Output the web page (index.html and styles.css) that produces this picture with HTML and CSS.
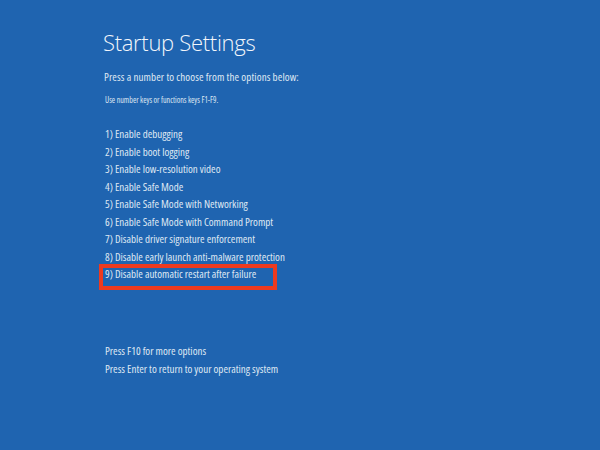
FILE: index.html
```html
<!DOCTYPE html>
<html>
<head>
<meta charset="utf-8">
<link rel="stylesheet" href="styles.css">
</head>
<body>
<div class="screen">
  <h1 class="title">Startup Settings</h1>
  <p class="lead">Press a number to choose from the options below:</p>
  <p class="hint">Use number keys or functions keys F1-F9.</p>
  <ul class="options">
    <li>1) Enable debugging</li>
    <li>2) Enable boot logging</li>
    <li>3) Enable low-resolution video</li>
    <li>4) Enable Safe Mode</li>
    <li>5) Enable Safe Mode with Networking</li>
    <li>6) Enable Safe Mode with Command Prompt</li>
    <li>7) Disable driver signature enforcement</li>
    <li>8) Disable early launch anti-malware protection</li>
    <li class="selected">9) Disable automatic restart after failure</li>
  </ul>
  <ul class="footer">
    <li>Press F10 for more options</li>
    <li>Press Enter to return to your operating system</li>
  </ul>
</div>
</body>
</html>
```
FILE: styles.css
```css
html, body {
  margin: 0;
  padding: 0;
  width: 600px;
  height: 450px;
  overflow: hidden;
}
body {
  background: #1f64b0;
  font-family: "Open Sans", "Noto Sans", sans-serif;
  font-stretch: 75%;
  color: #dfe8f3;
}
.screen {
  padding: 27px 0 0 103px;
  display: flex;
  flex-direction: column;
}
.title {
  margin: 0;
  font-weight: 300;
  font-stretch: 100%;
  font-size: 22px;
  line-height: 30px;
  letter-spacing: -0.3px;
  color: #f2f6fb;
}
.lead {
  margin: 12px 0 0 1px;
  font-size: 11px;
  line-height: 16px;
  letter-spacing: 0.1px;
}
.hint {
  margin: 9px 0 0 2px;
  font-size: 8px;
  line-height: 12px;
}
.options, .footer {
  list-style: none;
  margin: 19px 0 0 2px;
  padding: 0;
  font-size: 11px;
  line-height: 17.5px;
}
.options li {
  position: relative;
}
.selected::before {
  content: "";
  position: absolute;
  left: -6px;
  top: -1px;
  width: 178px;
  height: 26px;
  box-sizing: border-box;
  border: 4px solid #ee3a1f;
}
.footer {
  margin-top: 59.5px;
}
```
